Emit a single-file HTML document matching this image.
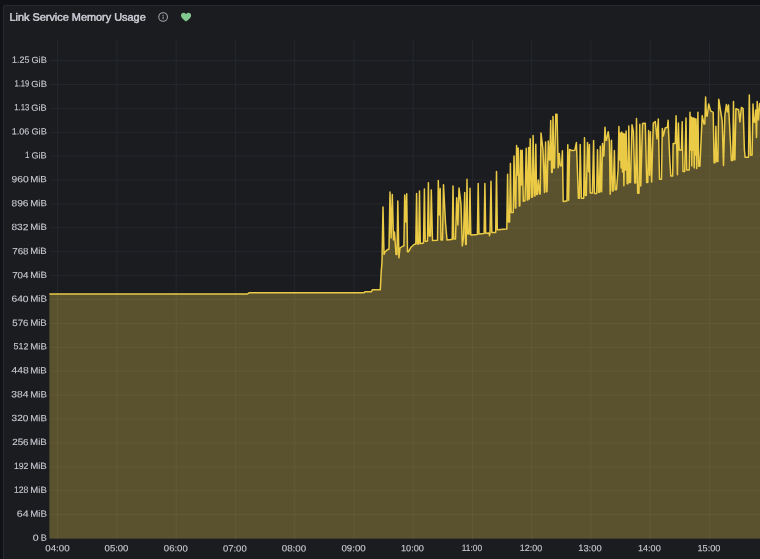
<!DOCTYPE html>
<html><head><meta charset="utf-8"><title>Link Service Memory Usage</title>
<style>
html,body{margin:0;padding:0;}
body{width:760px;height:559px;overflow:hidden;background:#111217;font-family:"Liberation Sans",sans-serif;position:relative;}
.panel{position:absolute;left:3px;top:5px;width:800px;height:600px;background:#1a1c20;border:1px solid #27292e;box-sizing:border-box;border-radius:2px 0 0 0;}
svg{position:absolute;left:0;top:0;}
svg text{font-family:"Liberation Sans",sans-serif;}
</style></head><body>
<div class="panel"></div>
<svg width="760" height="559" viewBox="0 0 760 559">
<g stroke="#3a3d43" stroke-opacity="0.5" stroke-width="0.7"><line x1="49.8" y1="538.40" x2="760" y2="538.40"/><line x1="49.8" y1="514.51" x2="760" y2="514.51"/><line x1="49.8" y1="490.62" x2="760" y2="490.62"/><line x1="49.8" y1="466.73" x2="760" y2="466.73"/><line x1="49.8" y1="442.84" x2="760" y2="442.84"/><line x1="49.8" y1="418.95" x2="760" y2="418.95"/><line x1="49.8" y1="395.06" x2="760" y2="395.06"/><line x1="49.8" y1="371.17" x2="760" y2="371.17"/><line x1="49.8" y1="347.28" x2="760" y2="347.28"/><line x1="49.8" y1="323.39" x2="760" y2="323.39"/><line x1="49.8" y1="299.50" x2="760" y2="299.50"/><line x1="49.8" y1="275.61" x2="760" y2="275.61"/><line x1="49.8" y1="251.72" x2="760" y2="251.72"/><line x1="49.8" y1="227.83" x2="760" y2="227.83"/><line x1="49.8" y1="203.94" x2="760" y2="203.94"/><line x1="49.8" y1="180.05" x2="760" y2="180.05"/><line x1="49.8" y1="156.16" x2="760" y2="156.16"/><line x1="49.8" y1="132.27" x2="760" y2="132.27"/><line x1="49.8" y1="108.38" x2="760" y2="108.38"/><line x1="49.8" y1="84.49" x2="760" y2="84.49"/><line x1="49.8" y1="60.60" x2="760" y2="60.60"/><line x1="57.65" y1="40" x2="57.65" y2="541.4"/><line x1="116.91" y1="40" x2="116.91" y2="541.4"/><line x1="176.16" y1="40" x2="176.16" y2="541.4"/><line x1="235.42" y1="40" x2="235.42" y2="541.4"/><line x1="294.67" y1="40" x2="294.67" y2="541.4"/><line x1="353.93" y1="40" x2="353.93" y2="541.4"/><line x1="413.18" y1="40" x2="413.18" y2="541.4"/><line x1="472.44" y1="40" x2="472.44" y2="541.4"/><line x1="531.69" y1="40" x2="531.69" y2="541.4"/><line x1="590.95" y1="40" x2="590.95" y2="541.4"/><line x1="650.20" y1="40" x2="650.20" y2="541.4"/><line x1="709.46" y1="40" x2="709.46" y2="541.4"/></g>
<path d="M49.4,294.0 L247.5,294.0 L249.0,292.8 L364.0,292.8 L365.0,291.8 L371.3,291.8 L372.3,289.8 L380.3,289.8 L381.2,272.0 L382.0,262.0 L383.0,207.0 L384.0,254.5 L385.0,252.0 L387.0,250.0 L389.0,249.0 L390.0,192.0 L391.1,238.0 L392.3,194.5 L393.5,240.0 L394.5,232.0 L396.0,254.5 L397.0,254.5 L397.8,201.0 L398.9,257.8 L400.0,248.0 L403.0,246.0 L403.9,246.0 L404.7,195.0 L405.7,222.0 L406.7,193.8 L407.5,251.8 L408.4,251.8 L411.0,247.2 L414.0,244.5 L415.8,244.0 L416.6,193.6 L417.4,244.0 L418.0,244.0 L418.7,244.0 L419.5,191.0 L420.3,243.5 L421.0,243.5 L423.5,243.0 L424.4,189.0 L425.2,241.2 L426.5,241.2 L427.5,241.0 L428.4,182.8 L429.2,236.0 L429.9,236.0 L430.5,236.0 L431.3,190.0 L432.5,240.6 L437.0,240.3 L437.5,240.3 L438.3,180.6 L439.2,215.0 L440.2,188.5 L441.0,240.0 L441.8,240.0 L442.5,240.0 L443.5,184.8 L445.5,223.0 L447.0,240.0 L451.5,239.5 L452.2,239.5 L453.0,185.9 L453.8,239.0 L454.5,239.0 L455.5,239.0 L456.7,197.8 L457.9,225.0 L459.0,187.9 L461.0,204.4 L462.3,245.9 L463.5,238.0 L464.7,192.5 L465.6,244.5 L466.2,244.5 L467.0,179.3 L467.8,234.0 L468.5,234.0 L469.2,234.0 L470.0,188.3 L470.8,235.0 L471.5,235.0 L476.8,234.4 L477.4,234.4 L478.2,183.4 L479.0,233.9 L479.6,233.9 L483.5,233.5 L484.1,233.5 L484.9,183.4 L485.7,233.2 L486.3,233.2 L489.0,233.0 L489.5,235.7 L490.0,233.0 L491.0,181.3 L491.8,232.6 L492.4,232.6 L495.2,232.4 L495.7,232.4 L496.5,171.4 L497.3,229.8 L497.9,229.8 L506.2,229.0 L506.8,229.0 L507.6,174.2 L508.4,222.0 L509.0,222.0 L509.6,222.0 L510.4,163.6 L511.2,212.5 L512.0,212.5 L513.2,212.5 L514.0,156.0 L515.3,208.0 L515.8,208.0 L516.6,145.5 L517.4,175.0 L518.2,148.0 L519.3,206.0 L519.8,206.0 L520.6,150.3 L521.4,185.0 L522.2,150.3 L523.3,201.3 L525.0,200.8 L526.2,148.3 L527.3,200.0 L527.8,200.0 L528.6,147.5 L529.3,199.0 L530.2,138.7 L531.5,197.3 L532.3,197.3 L533.1,135.5 L534.3,196.0 L535.0,196.0 L535.8,144.3 L536.6,194.5 L537.3,194.5 L538.3,180.0 L539.5,194.0 L540.2,194.0 L541.0,133.1 L543.0,150.0 L544.5,192.5 L545.6,142.0 L546.4,191.7 L547.0,191.7 L548.3,141.0 L549.3,160.0 L549.9,160.0 L550.7,120.5 L551.6,172.4 L552.2,172.4 L553.0,116.6 L553.8,168.0 L554.5,168.0 L555.8,114.3 L557.0,114.3 L558.2,167.8 L559.3,153.4 L560.2,165.8 L561.6,165.8 L562.4,150.8 L563.2,201.6 L564.2,201.6 L565.5,201.0 L567.0,201.0 L567.8,144.8 L568.6,200.3 L569.6,149.5 L572.0,150.6 L574.8,150.3 L576.4,142.6 L578.4,198.3 L579.4,198.3 L580.2,144.5 L581.4,198.3 L583.7,198.3 L584.5,137.7 L585.3,195.6 L586.3,195.6 L587.5,142.4 L588.6,171.8 L589.4,144.4 L590.2,193.0 L591.1,193.0 L592.4,193.0 L593.6,140.4 L594.4,193.6 L595.3,193.6 L596.7,193.6 L597.5,149.8 L598.6,192.3 L599.5,192.3 L600.3,146.2 L601.1,191.7 L601.6,191.7 L602.5,143.4 L603.3,155.9 L603.9,155.9 L605.0,127.3 L605.8,140.3 L606.5,140.3 L608.2,131.7 L609.4,141.0 L610.2,194.3 L611.5,140.3 L612.3,191.0 L613.2,191.0 L614.4,150.4 L615.2,189.7 L616.5,189.7 L618.1,170.0 L618.9,126.4 L619.7,160.0 L620.4,133.0 L621.1,168.0 L621.8,132.0 L622.5,172.0 L623.2,133.5 L623.9,185.7 L624.7,134.0 L625.4,170.0 L626.1,131.0 L627.2,183.7 L628.0,183.7 L628.8,126.0 L629.6,182.4 L630.5,182.4 L632.0,124.7 L633.4,131.7 L634.8,183.0 L635.7,183.0 L636.5,118.5 L637.7,193.3 L639.0,193.3 L639.8,124.2 L640.8,186.0 L642.5,123.5 L645.3,123.3 L646.7,182.6 L647.8,182.6 L648.6,130.4 L649.6,175.3 L650.4,131.7 L651.6,182.0 L653.3,123.1 L655.3,121.5 L657.0,139.0 L658.3,119.1 L659.5,179.3 L661.5,179.3 L662.3,128.4 L663.3,136.0 L665.2,128.0 L667.4,127.3 L668.1,120.2 L669.8,160.0 L670.8,176.0 L672.7,176.0 L673.1,143.6 L675.3,143.6 L676.1,115.8 L677.4,174.7 L678.4,123.1 L679.2,150.0 L680.5,150.0 L681.4,150.0 L682.2,121.8 L683.0,171.4 L684.7,171.4 L686.0,118.1 L686.8,170.0 L688.0,170.0 L689.2,170.0 L690.0,112.3 L690.6,150.0 L691.2,117.0 L691.8,166.0 L692.4,118.0 L693.0,150.0 L693.6,118.0 L694.2,168.0 L694.8,118.5 L695.4,155.0 L696.0,119.0 L696.7,168.5 L697.9,112.2 L698.7,166.3 L699.9,166.3 L702.2,115.6 L704.0,124.0 L704.8,124.0 L705.6,97.1 L706.4,116.1 L707.2,116.1 L708.7,104.0 L710.6,110.9 L713.2,112.4 L714.1,162.7 L715.1,162.7 L715.9,126.2 L716.7,161.4 L717.4,161.4 L717.9,161.4 L718.7,99.2 L722.2,120.9 L723.5,165.4 L724.9,115.0 L726.4,104.5 L727.4,112.0 L728.5,105.0 L731.4,160.5 L732.7,160.5 L733.5,101.4 L734.3,159.7 L734.9,159.7 L735.9,108.7 L738.6,109.8 L739.9,122.0 L741.4,107.4 L743.1,108.7 L744.4,150.0 L745.2,157.3 L747.3,157.3 L748.5,157.3 L749.3,95.0 L750.5,155.2 L752.1,155.0 L753.0,104.0 L753.8,122.0 L754.9,122.0 L755.7,110.0 L756.5,137.4 L757.2,101.4 L758.5,120.0 L759.7,103.5 L761.0,103.5 L761,538.4 L49.4,538.4 Z" fill="#ebca4e" fill-opacity="0.31" stroke="none"/>
<path d="M49.4,294.0 L247.5,294.0 L249.0,292.8 L364.0,292.8 L365.0,291.8 L371.3,291.8 L372.3,289.8 L380.3,289.8 L381.2,272.0 L382.0,262.0 L383.0,207.0 L384.0,254.5 L385.0,252.0 L387.0,250.0 L389.0,249.0 L390.0,192.0 L391.1,238.0 L392.3,194.5 L393.5,240.0 L394.5,232.0 L396.0,254.5 L397.0,254.5 L397.8,201.0 L398.9,257.8 L400.0,248.0 L403.0,246.0 L403.9,246.0 L404.7,195.0 L405.7,222.0 L406.7,193.8 L407.5,251.8 L408.4,251.8 L411.0,247.2 L414.0,244.5 L415.8,244.0 L416.6,193.6 L417.4,244.0 L418.0,244.0 L418.7,244.0 L419.5,191.0 L420.3,243.5 L421.0,243.5 L423.5,243.0 L424.4,189.0 L425.2,241.2 L426.5,241.2 L427.5,241.0 L428.4,182.8 L429.2,236.0 L429.9,236.0 L430.5,236.0 L431.3,190.0 L432.5,240.6 L437.0,240.3 L437.5,240.3 L438.3,180.6 L439.2,215.0 L440.2,188.5 L441.0,240.0 L441.8,240.0 L442.5,240.0 L443.5,184.8 L445.5,223.0 L447.0,240.0 L451.5,239.5 L452.2,239.5 L453.0,185.9 L453.8,239.0 L454.5,239.0 L455.5,239.0 L456.7,197.8 L457.9,225.0 L459.0,187.9 L461.0,204.4 L462.3,245.9 L463.5,238.0 L464.7,192.5 L465.6,244.5 L466.2,244.5 L467.0,179.3 L467.8,234.0 L468.5,234.0 L469.2,234.0 L470.0,188.3 L470.8,235.0 L471.5,235.0 L476.8,234.4 L477.4,234.4 L478.2,183.4 L479.0,233.9 L479.6,233.9 L483.5,233.5 L484.1,233.5 L484.9,183.4 L485.7,233.2 L486.3,233.2 L489.0,233.0 L489.5,235.7 L490.0,233.0 L491.0,181.3 L491.8,232.6 L492.4,232.6 L495.2,232.4 L495.7,232.4 L496.5,171.4 L497.3,229.8 L497.9,229.8 L506.2,229.0 L506.8,229.0 L507.6,174.2 L508.4,222.0 L509.0,222.0 L509.6,222.0 L510.4,163.6 L511.2,212.5 L512.0,212.5 L513.2,212.5 L514.0,156.0 L515.3,208.0 L515.8,208.0 L516.6,145.5 L517.4,175.0 L518.2,148.0 L519.3,206.0 L519.8,206.0 L520.6,150.3 L521.4,185.0 L522.2,150.3 L523.3,201.3 L525.0,200.8 L526.2,148.3 L527.3,200.0 L527.8,200.0 L528.6,147.5 L529.3,199.0 L530.2,138.7 L531.5,197.3 L532.3,197.3 L533.1,135.5 L534.3,196.0 L535.0,196.0 L535.8,144.3 L536.6,194.5 L537.3,194.5 L538.3,180.0 L539.5,194.0 L540.2,194.0 L541.0,133.1 L543.0,150.0 L544.5,192.5 L545.6,142.0 L546.4,191.7 L547.0,191.7 L548.3,141.0 L549.3,160.0 L549.9,160.0 L550.7,120.5 L551.6,172.4 L552.2,172.4 L553.0,116.6 L553.8,168.0 L554.5,168.0 L555.8,114.3 L557.0,114.3 L558.2,167.8 L559.3,153.4 L560.2,165.8 L561.6,165.8 L562.4,150.8 L563.2,201.6 L564.2,201.6 L565.5,201.0 L567.0,201.0 L567.8,144.8 L568.6,200.3 L569.6,149.5 L572.0,150.6 L574.8,150.3 L576.4,142.6 L578.4,198.3 L579.4,198.3 L580.2,144.5 L581.4,198.3 L583.7,198.3 L584.5,137.7 L585.3,195.6 L586.3,195.6 L587.5,142.4 L588.6,171.8 L589.4,144.4 L590.2,193.0 L591.1,193.0 L592.4,193.0 L593.6,140.4 L594.4,193.6 L595.3,193.6 L596.7,193.6 L597.5,149.8 L598.6,192.3 L599.5,192.3 L600.3,146.2 L601.1,191.7 L601.6,191.7 L602.5,143.4 L603.3,155.9 L603.9,155.9 L605.0,127.3 L605.8,140.3 L606.5,140.3 L608.2,131.7 L609.4,141.0 L610.2,194.3 L611.5,140.3 L612.3,191.0 L613.2,191.0 L614.4,150.4 L615.2,189.7 L616.5,189.7 L618.1,170.0 L618.9,126.4 L619.7,160.0 L620.4,133.0 L621.1,168.0 L621.8,132.0 L622.5,172.0 L623.2,133.5 L623.9,185.7 L624.7,134.0 L625.4,170.0 L626.1,131.0 L627.2,183.7 L628.0,183.7 L628.8,126.0 L629.6,182.4 L630.5,182.4 L632.0,124.7 L633.4,131.7 L634.8,183.0 L635.7,183.0 L636.5,118.5 L637.7,193.3 L639.0,193.3 L639.8,124.2 L640.8,186.0 L642.5,123.5 L645.3,123.3 L646.7,182.6 L647.8,182.6 L648.6,130.4 L649.6,175.3 L650.4,131.7 L651.6,182.0 L653.3,123.1 L655.3,121.5 L657.0,139.0 L658.3,119.1 L659.5,179.3 L661.5,179.3 L662.3,128.4 L663.3,136.0 L665.2,128.0 L667.4,127.3 L668.1,120.2 L669.8,160.0 L670.8,176.0 L672.7,176.0 L673.1,143.6 L675.3,143.6 L676.1,115.8 L677.4,174.7 L678.4,123.1 L679.2,150.0 L680.5,150.0 L681.4,150.0 L682.2,121.8 L683.0,171.4 L684.7,171.4 L686.0,118.1 L686.8,170.0 L688.0,170.0 L689.2,170.0 L690.0,112.3 L690.6,150.0 L691.2,117.0 L691.8,166.0 L692.4,118.0 L693.0,150.0 L693.6,118.0 L694.2,168.0 L694.8,118.5 L695.4,155.0 L696.0,119.0 L696.7,168.5 L697.9,112.2 L698.7,166.3 L699.9,166.3 L702.2,115.6 L704.0,124.0 L704.8,124.0 L705.6,97.1 L706.4,116.1 L707.2,116.1 L708.7,104.0 L710.6,110.9 L713.2,112.4 L714.1,162.7 L715.1,162.7 L715.9,126.2 L716.7,161.4 L717.4,161.4 L717.9,161.4 L718.7,99.2 L722.2,120.9 L723.5,165.4 L724.9,115.0 L726.4,104.5 L727.4,112.0 L728.5,105.0 L731.4,160.5 L732.7,160.5 L733.5,101.4 L734.3,159.7 L734.9,159.7 L735.9,108.7 L738.6,109.8 L739.9,122.0 L741.4,107.4 L743.1,108.7 L744.4,150.0 L745.2,157.3 L747.3,157.3 L748.5,157.3 L749.3,95.0 L750.5,155.2 L752.1,155.0 L753.0,104.0 L753.8,122.0 L754.9,122.0 L755.7,110.0 L756.5,137.4 L757.2,101.4 L758.5,120.0 L759.7,103.5 L761.0,103.5" fill="none" stroke="#ebcb45" stroke-width="1.5" stroke-linejoin="round" stroke-linecap="butt"/>
<g fill="none" stroke="#a2a3ab" stroke-width="1.05"><circle cx="163.1" cy="17" r="4.35"/></g>
<rect x="162.6" y="16.5" width="1" height="2.7" fill="#a2a3ab"/><rect x="162.55" y="14.9" width="1.1" height="1.05" fill="#a2a3ab"/>
<path transform="translate(0,0.15)" d="M186.05,21.3 C184.6,20.1 181,17.9 181,15.3 C181,13.7 182.2,12.7 183.5,12.7 C184.6,12.7 185.5,13.3 186.05,14.1 C186.6,13.3 187.5,12.7 188.6,12.7 C189.9,12.7 191.1,13.7 191.1,15.3 C191.1,17.9 187.5,20.1 186.05,21.3 Z" fill="#83c98f"/>
</svg>
<svg width="760" height="559" viewBox="0 0 760 559" style="will-change:transform">
<g transform="rotate(0.04)" font-size="9.0px" fill="#c9cad2" stroke="#c9cad2" stroke-width="0.12">
<text><tspan x="12.13" y="62.83" textLength="17.30" lengthAdjust="spacingAndGlyphs">1.25</tspan> <tspan x="31.46" y="62.91" textLength="15.40" lengthAdjust="spacingAndGlyphs">GiB</tspan></text>
<text><tspan x="14.51" y="86.43" textLength="14.94" lengthAdjust="spacingAndGlyphs">1.19</tspan> <tspan x="31.39" y="86.86" textLength="15.61" lengthAdjust="spacingAndGlyphs">GiB</tspan></text>
<text><tspan x="14.32" y="110.35" textLength="15.19" lengthAdjust="spacingAndGlyphs">1.13</tspan> <tspan x="31.45" y="110.73" textLength="15.36" lengthAdjust="spacingAndGlyphs">GiB</tspan></text>
<text><tspan x="11.95" y="134.38" textLength="17.45" lengthAdjust="spacingAndGlyphs">1.06</tspan> <tspan x="31.54" y="134.60" textLength="15.36" lengthAdjust="spacingAndGlyphs">GiB</tspan></text>
<text><tspan x="25.16" y="158.10" textLength="4.47" lengthAdjust="spacingAndGlyphs">1</tspan> <tspan x="31.55" y="158.40" textLength="15.33" lengthAdjust="spacingAndGlyphs">GiB</tspan></text>
<text><tspan x="11.68" y="182.35" textLength="17.08" lengthAdjust="spacingAndGlyphs">960</tspan> <tspan x="30.29" y="182.28" textLength="16.65" lengthAdjust="spacingAndGlyphs">MiB</tspan></text>
<text><tspan x="11.66" y="206.13" textLength="17.05" lengthAdjust="spacingAndGlyphs">896</tspan> <tspan x="30.45" y="206.24" textLength="16.58" lengthAdjust="spacingAndGlyphs">MiB</tspan></text>
<text><tspan x="11.63" y="230.11" textLength="16.92" lengthAdjust="spacingAndGlyphs">832</tspan> <tspan x="30.46" y="230.10" textLength="16.46" lengthAdjust="spacingAndGlyphs">MiB</tspan></text>
<text><tspan x="12.35" y="254.18" textLength="16.40" lengthAdjust="spacingAndGlyphs">768</tspan> <tspan x="30.47" y="254.09" textLength="16.44" lengthAdjust="spacingAndGlyphs">MiB</tspan></text>
<text><tspan x="12.35" y="278.24" textLength="16.37" lengthAdjust="spacingAndGlyphs">704</tspan> <tspan x="30.43" y="278.05" textLength="16.67" lengthAdjust="spacingAndGlyphs">MiB</tspan></text>
<text><tspan x="11.67" y="301.86" textLength="17.09" lengthAdjust="spacingAndGlyphs">640</tspan> <tspan x="30.38" y="301.84" textLength="16.72" lengthAdjust="spacingAndGlyphs">MiB</tspan></text>
<text><tspan x="12.60" y="325.99" textLength="16.09" lengthAdjust="spacingAndGlyphs">576</tspan> <tspan x="30.40" y="325.70" textLength="16.65" lengthAdjust="spacingAndGlyphs">MiB</tspan></text>
<text><tspan x="13.86" y="349.36" textLength="14.89" lengthAdjust="spacingAndGlyphs">512</tspan> <tspan x="30.54" y="349.60" textLength="16.56" lengthAdjust="spacingAndGlyphs">MiB</tspan></text>
<text><tspan x="11.68" y="373.34" textLength="17.26" lengthAdjust="spacingAndGlyphs">448</tspan> <tspan x="30.43" y="373.43" textLength="16.66" lengthAdjust="spacingAndGlyphs">MiB</tspan></text>
<text><tspan x="11.61" y="397.30" textLength="17.14" lengthAdjust="spacingAndGlyphs">384</tspan> <tspan x="30.49" y="397.38" textLength="16.65" lengthAdjust="spacingAndGlyphs">MiB</tspan></text>
<text><tspan x="11.90" y="421.11" textLength="16.84" lengthAdjust="spacingAndGlyphs">320</tspan> <tspan x="30.58" y="421.14" textLength="16.61" lengthAdjust="spacingAndGlyphs">MiB</tspan></text>
<text><tspan x="12.51" y="445.11" textLength="16.36" lengthAdjust="spacingAndGlyphs">256</tspan> <tspan x="30.42" y="445.05" textLength="16.68" lengthAdjust="spacingAndGlyphs">MiB</tspan></text>
<text><tspan x="14.21" y="468.92" textLength="14.48" lengthAdjust="spacingAndGlyphs">192</tspan> <tspan x="30.46" y="469.08" textLength="16.70" lengthAdjust="spacingAndGlyphs">MiB</tspan></text>
<text><tspan x="14.25" y="492.77" textLength="14.57" lengthAdjust="spacingAndGlyphs">128</tspan> <tspan x="30.66" y="493.00" textLength="16.47" lengthAdjust="spacingAndGlyphs">MiB</tspan></text>
<text><tspan x="17.23" y="516.85" textLength="11.81" lengthAdjust="spacingAndGlyphs">64</tspan> <tspan x="30.59" y="516.83" textLength="16.68" lengthAdjust="spacingAndGlyphs">MiB</tspan></text>
<text><tspan x="33.22" y="540.70" textLength="5.85" lengthAdjust="spacingAndGlyphs">0</tspan> <tspan x="41.16" y="540.78" textLength="6.08" lengthAdjust="spacingAndGlyphs">B</tspan></text>
<text><tspan x="45.66" y="551.31" textLength="24.27" lengthAdjust="spacingAndGlyphs">04:00</tspan></text>
<text><tspan x="104.98" y="551.28" textLength="23.83" lengthAdjust="spacingAndGlyphs">05:00</tspan></text>
<text><tspan x="164.25" y="551.25" textLength="23.87" lengthAdjust="spacingAndGlyphs">06:00</tspan></text>
<text><tspan x="223.29" y="551.30" textLength="23.77" lengthAdjust="spacingAndGlyphs">07:00</tspan></text>
<text><tspan x="282.11" y="551.18" textLength="24.36" lengthAdjust="spacingAndGlyphs">08:00</tspan></text>
<text><tspan x="341.79" y="550.99" textLength="24.39" lengthAdjust="spacingAndGlyphs">09:00</tspan></text>
<text><tspan x="401.40" y="550.96" textLength="22.98" lengthAdjust="spacingAndGlyphs">10:00</tspan></text>
<text><tspan x="462.24" y="550.79" textLength="20.19" lengthAdjust="spacingAndGlyphs">11:00</tspan></text>
<text><tspan x="520.19" y="550.76" textLength="22.31" lengthAdjust="spacingAndGlyphs">12:00</tspan></text>
<text><tspan x="578.61" y="550.73" textLength="23.37" lengthAdjust="spacingAndGlyphs">13:00</tspan></text>
<text><tspan x="638.29" y="550.82" textLength="22.82" lengthAdjust="spacingAndGlyphs">14:00</tspan></text>
<text><tspan x="697.84" y="550.71" textLength="22.96" lengthAdjust="spacingAndGlyphs">15:00</tspan></text>

</g>
<g transform="rotate(0.04)" font-size="10.8px" fill="#cfd0d8" stroke="#cfd0d8" stroke-width="0.45">
<text x="9.45" y="20.75" textLength="136.30" lengthAdjust="spacingAndGlyphs">Link Service Memory Usage</text>
</g>
</svg>
</body></html>
